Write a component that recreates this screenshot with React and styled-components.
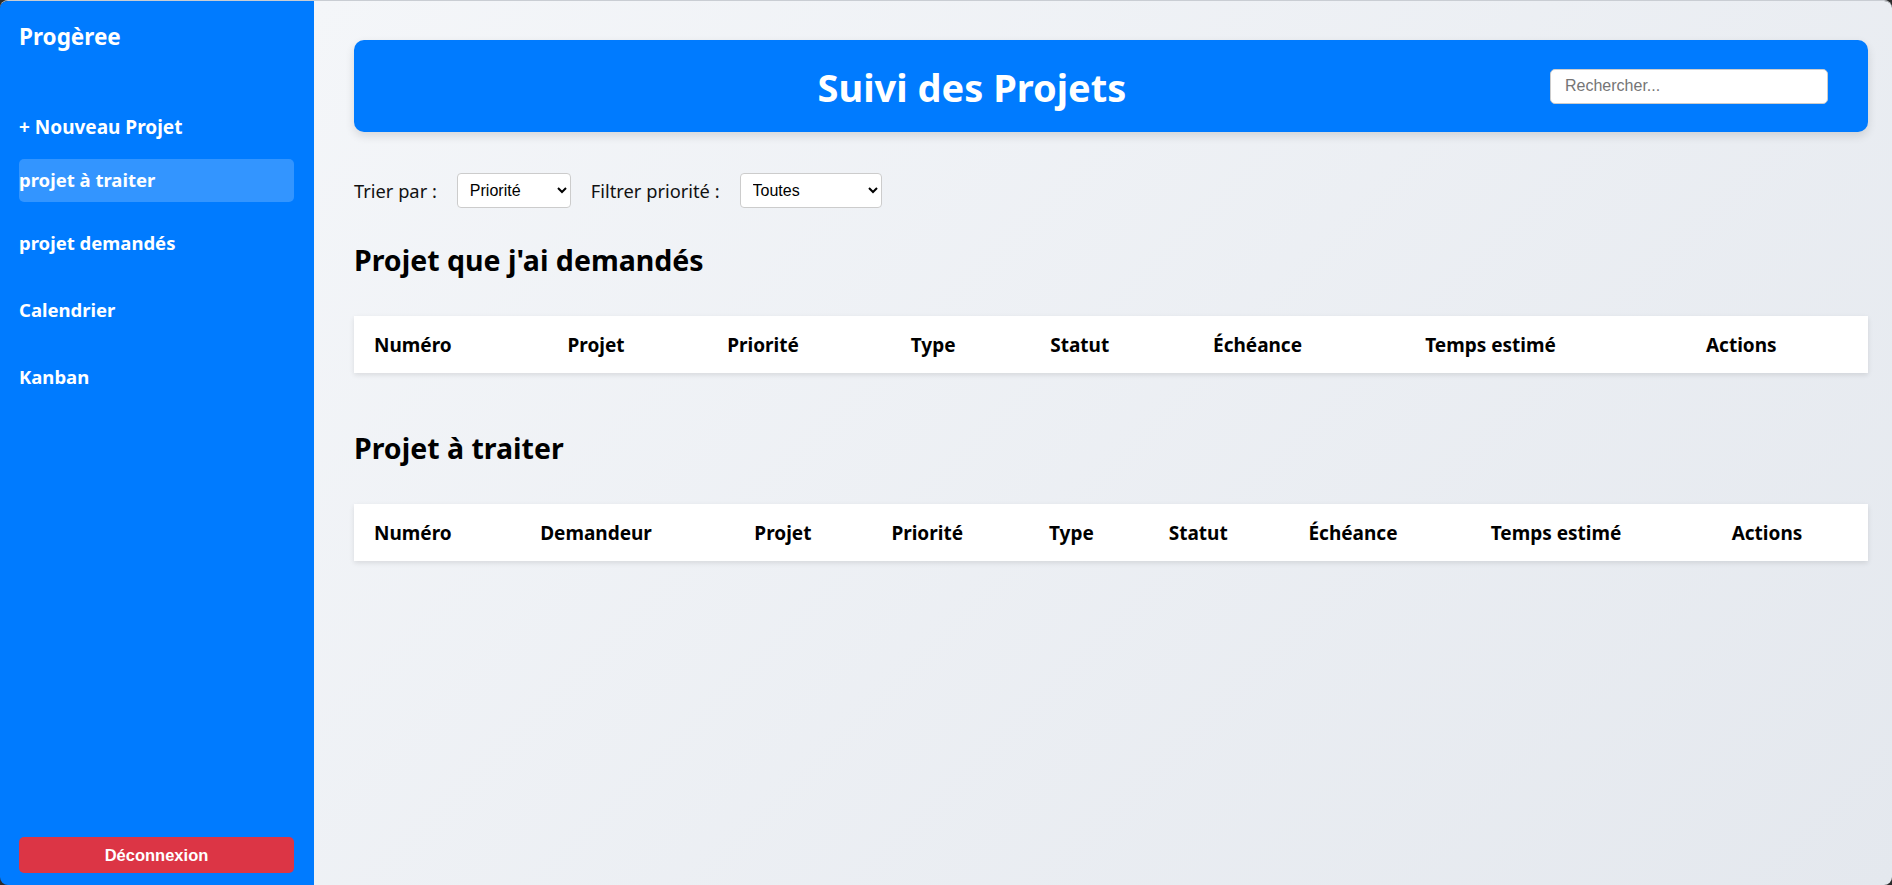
import React from 'react';
import styled, { createGlobalStyle } from 'styled-components';

const GlobalStyle = createGlobalStyle`
  html, body {
    margin: 0;
    padding: 0;
    height: 100%;
  }
  body {
    background: #2b2b2b;
    font-family: "Noto Sans", "Open Sans", sans-serif;
  }
  #root {
    height: 100%;
  }
  * {
    box-sizing: border-box;
  }
`;

const COLUMNS_ASKED = ['Numéro', 'Projet', 'Priorité', 'Type', 'Statut', 'Échéance', 'Temps estimé', 'Actions'];
const COLUMNS_TODO = ['Numéro', 'Demandeur', 'Projet', 'Priorité', 'Type', 'Statut', 'Échéance', 'Temps estimé', 'Actions'];

const NAV = [
  { label: 'projet à traiter', active: true },
  { label: 'projet demandés' },
  { label: 'Calendrier' },
  { label: 'Kanban' },
];

const App = () => {
  return (
    <>
      <GlobalStyle />
      <Layout>
        <Sidebar>
          <Logo>Progèree</Logo>
          <NewProject>+ Nouveau Projet</NewProject>
          <NavList>
            {NAV.map(item => (
              <NavItem key={item.label} $active={item.active}>{item.label}</NavItem>
            ))}
          </NavList>
          <LogoutButton>Déconnexion</LogoutButton>
        </Sidebar>

        <Main>
          <Header>
            <Title>Suivi des Projets</Title>
            <Search placeholder="Rechercher..." />
          </Header>

          <Filters>
            <FilterLabel>Trier par :</FilterLabel>
            <Select $width={114} defaultValue="priorite">
              <option value="priorite">Priorité</option>
              <option value="echeance">Échéance</option>
            </Select>
            <FilterLabel>Filtrer priorité :</FilterLabel>
            <Select $width={142} defaultValue="toutes">
              <option value="toutes">Toutes</option>
              <option value="haute">Haute</option>
              <option value="moyenne">Moyenne</option>
              <option value="basse">Basse</option>
            </Select>
          </Filters>

          <Section>
            <SectionTitle>Projet que j'ai demandés</SectionTitle>
            <Table>
              <thead>
                <tr>
                  {COLUMNS_ASKED.map(c => <Th key={c}>{c}</Th>)}
                </tr>
              </thead>
              <tbody />
            </Table>
          </Section>

          <Section>
            <SectionTitle>Projet à traiter</SectionTitle>
            <Table>
              <thead>
                <tr>
                  {COLUMNS_TODO.map(c => <Th key={c}>{c}</Th>)}
                </tr>
              </thead>
              <tbody />
            </Table>
          </Section>
        </Main>
      </Layout>
    </>
  );
};

const Layout = styled.div`
  display: flex;
  height: 100vh;
  overflow: hidden;
  border-radius: 8px;
  border-top: 1px solid #c9cdd3;
`

const Sidebar = styled.aside`
  width: 314px;
  flex-shrink: 0;
  display: flex;
  flex-direction: column;
  padding: 20px 20px 12px 19px;
  background: #007bff;
  color: #fff;
`

const Logo = styled.h1`
  margin: 0 0 53px;
  font-size: 22.5px;
  line-height: 32px;
  font-weight: 700;
`

const NewProject = styled.div`
  padding: 10px 0;
  margin-bottom: 10px;
  font-size: 19px;
  line-height: 23px;
  font-weight: 700;
  cursor: pointer;
`

const NavList = styled.nav`
  display: flex;
  flex-direction: column;
  gap: 24px;
`

const NavItem = styled.a`
  display: block;
  padding: ${props => props.$active ? '9px 0 11px' : '10px 0'};
  margin-bottom: ${props => props.$active ? -5 : 0}px;
  border-radius: 5px;
  background: ${props => props.$active ? 'rgba(255, 255, 255, 0.2)' : 'transparent'};
  font-size: 18.5px;
  line-height: 23px;
  font-weight: 700;
  color: #fff;
  cursor: pointer;
`

const LogoutButton = styled.button`
  margin-top: auto;
  width: 100%;
  height: 36px;
  border: none;
  border-radius: 5px;
  background: #dc3545;
  color: #fff;
  font-family: "Liberation Sans", Arial, sans-serif;
  font-size: 16.5px;
  font-weight: 700;
  cursor: pointer;
`

const Main = styled.main`
  flex: 1;
  padding: 39px 24px 40px 40px;
  overflow: auto;
  background: linear-gradient(135deg, #f4f6f9 0%, #e4e8ee 100%);
`

const Header = styled.header`
  display: flex;
  align-items: center;
  height: 92px;
  padding: 0 40px;
  border-radius: 10px;
  background: #007bff;
  box-shadow: 0 4px 10px rgba(0, 0, 0, 0.12);
`

const Title = styled.h1`
  flex: 1;
  margin: 0;
  padding-top: 2px;
  text-align: center;
  color: #fff;
  font-size: 38px;
  font-weight: 700;
`

const Search = styled.input`
  width: 278px;
  height: 35px;
  padding: 0 14px;
  border: 1px solid #ccc;
  border-radius: 5px;
  font-family: "Liberation Sans", Arial, sans-serif;
  font-size: 16px;
  outline: none;
  &::placeholder {
    color: #757575;
  }
`

const Filters = styled.div`
  display: flex;
  align-items: center;
  gap: 20px;
  margin-top: 41px;
`

const FilterLabel = styled.label`
  font-size: 18.3px;
  color: #111;
`

const Select = styled.select`
  width: ${props => props.$width}px;
  height: 35px;
  padding: 0 8px;
  border: 1px solid #ccc;
  border-radius: 4px;
  background: #fff;
  font-family: "Liberation Sans", Arial, sans-serif;
  font-size: 16px;
  color: #000;
`

const Section = styled.section`
  & + & {
    margin-top: 57px;
  }
`

const SectionTitle = styled.h2`
  margin: 34px 0 38px;
  font-size: 28.5px;
  line-height: 36px;
  font-weight: 700;
  color: #000;
`

const Table = styled.table`
  width: 100%;
  border-collapse: collapse;
  background: #fff;
  box-shadow: 0 2px 5px rgba(0, 0, 0, 0.1);
`

const Th = styled.th`
  padding: 17px 20px 15px;
  text-align: left;
  font-size: 19px;
  line-height: 25px;
  font-weight: 700;
  color: #000;
  white-space: nowrap;
`

export default App;
